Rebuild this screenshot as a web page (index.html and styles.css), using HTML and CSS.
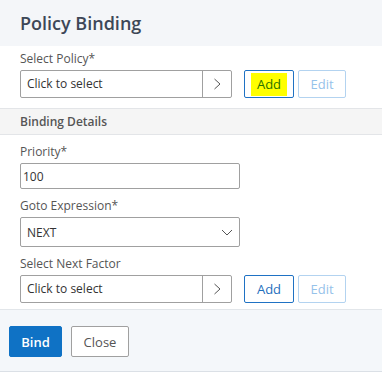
FILE: index.html
```html
<!DOCTYPE html>
<html lang="en">
<head>
    <meta charset="UTF-8">
    <title>Policy Binding</title>
    <link rel="stylesheet" href="styles.css">
</head>
<body>
    <div class="panel">
        <div class="titulo">
            <h1>Policy Binding</h1>
        </div>

        <div class="seccion primera">
            <label class="etiqueta">Select Policy*</label>
            <div class="fila">
                <div class="selector">
                    <span class="texto">Click to select</span>
                    <span class="flecha">
                        <svg width="9" height="12" viewBox="0 0 9 12"><path d="M1.5 1 L7 6 L1.5 11" fill="none" stroke="#555" stroke-width="1"/></svg>
                    </span>
                </div>
                <button class="boton-add"><span class="resaltado">Add</span></button>
                <button class="boton-edit" disabled>Edit</button>
            </div>
        </div>

        <div class="subtitulo">Binding Details</div>

        <div class="seccion detalles">
            <div class="campo">
                <label class="etiqueta">Priority*</label>
                <input type="text" class="entrada" value="100">
            </div>
            <div class="campo">
                <label class="etiqueta">Goto Expression*</label>
                <div class="desplegable">
                    <span>NEXT</span>
                    <svg width="12" height="7" viewBox="0 0 12 7"><path d="M1 1 L6 6 L11 1" fill="none" stroke="#555" stroke-width="1"/></svg>
                </div>
            </div>
            <div class="campo ultimo">
                <label class="etiqueta">Select Next Factor</label>
                <div class="fila">
                    <div class="selector">
                        <span class="texto">Click to select</span>
                        <span class="flecha">
                            <svg width="9" height="12" viewBox="0 0 9 12"><path d="M1.5 1 L7 6 L1.5 11" fill="none" stroke="#555" stroke-width="1"/></svg>
                        </span>
                    </div>
                    <button class="boton-add">Add</button>
                    <button class="boton-edit" disabled>Edit</button>
                </div>
            </div>
        </div>

        <div class="pie">
            <button class="boton-bind">Bind</button>
            <button class="boton-close">Close</button>
        </div>
    </div>
</body>
</html>
```

FILE: styles.css
```css
body {
    margin: 0;
    background-color: #fff;
    font-family: "Open Sans", "Liberation Sans", sans-serif;
    color: #333;
}
.panel {
    width: 382px;
}
.titulo {
    height: 46px;
    background-color: #f4f6f9;
    padding: 0 20px;
    box-sizing: border-box;
}
.titulo h1 {
    margin: 0;
    padding-top: 9px;
    font-size: 18px;
    line-height: 28px;
    font-weight: 600;
    color: #3d4757;
}
.seccion {
    padding: 0 20px;
}
.seccion.primera {
    padding-top: 5px;
    padding-bottom: 10px;
}
.seccion.detalles {
    padding-top: 9px;
    padding-bottom: 6px;
}
.etiqueta {
    display: block;
    font-size: 12px;
    line-height: 16px;
    color: #555;
    margin-bottom: 3px;
}
.fila {
    display: flex;
    align-items: center;
}
.selector {
    display: flex;
    width: 212px;
    height: 28px;
    border: 1px solid #a0a0a0;
    border-radius: 2px;
    box-sizing: border-box;
}
.selector .texto {
    flex: 1;
    padding-left: 6px;
    font-size: 12px;
    line-height: 26px;
    color: #333;
}
.selector .flecha {
    width: 28px;
    border-left: 1px solid #a0a0a0;
    display: flex;
    align-items: center;
    justify-content: center;
}
button {
    font-family: "Open Sans", "Liberation Sans", sans-serif;
    font-size: 13px;
    box-sizing: border-box;
    border-radius: 2px;
    cursor: pointer;
    padding: 0;
}
.boton-add {
    margin-left: 12px;
    width: 50px;
    height: 28px;
    background-color: #fff;
    border: 1px solid #1f72c4;
    color: #1f6fbd;
}
.resaltado {
    background-color: #ffff00;
    color: #2a7300;
    padding: 2px 6px 3px;
}
.boton-edit {
    margin-left: 4px;
    width: 48px;
    height: 28px;
    background-color: #fff;
    border: 1px solid #b3d3f0;
    color: #96c2ea;
}
.subtitulo {
    height: 27px;
    box-sizing: border-box;
    background-color: #f5f5f5;
    border-top: 1px solid #e3e5e8;
    border-bottom: 1px solid #e3e5e8;
    padding-left: 20px;
    font-size: 12px;
    line-height: 25px;
    font-weight: 600;
    color: #555;
}
.campo {
    margin-bottom: 9px;
}
.campo.ultimo {
    margin-bottom: 0;
}
.entrada {
    display: block;
    width: 220px;
    height: 26px;
    box-sizing: border-box;
    border: 1px solid #a0a0a0;
    border-radius: 2px;
    padding: 0 2px;
    font-family: "Open Sans", "Liberation Sans", sans-serif;
    font-size: 12px;
    color: #333;
}
.desplegable {
    display: flex;
    align-items: center;
    justify-content: space-between;
    width: 220px;
    height: 30px;
    box-sizing: border-box;
    border: 1px solid #a0a0a0;
    border-radius: 2px;
    padding: 0 6px;
    font-size: 12px;
    color: #333;
}
.pie {
    display: flex;
    gap: 9px;
    height: 63px;
    box-sizing: border-box;
    background-color: #f4f7fa;
    border-top: 1px solid #e2e6ea;
    border-bottom: 1px solid #dbe0e6;
    padding: 16px 9px 0;
}
.boton-bind {
    width: 53px;
    height: 31px;
    background-color: #0f72c5;
    border: 1px solid #0f72c5;
    color: #fff;
    font-weight: 600;
}
.boton-close {
    width: 58px;
    height: 31px;
    background-color: #fff;
    border: 1px solid #a0a0a0;
    color: #555;
}
```
